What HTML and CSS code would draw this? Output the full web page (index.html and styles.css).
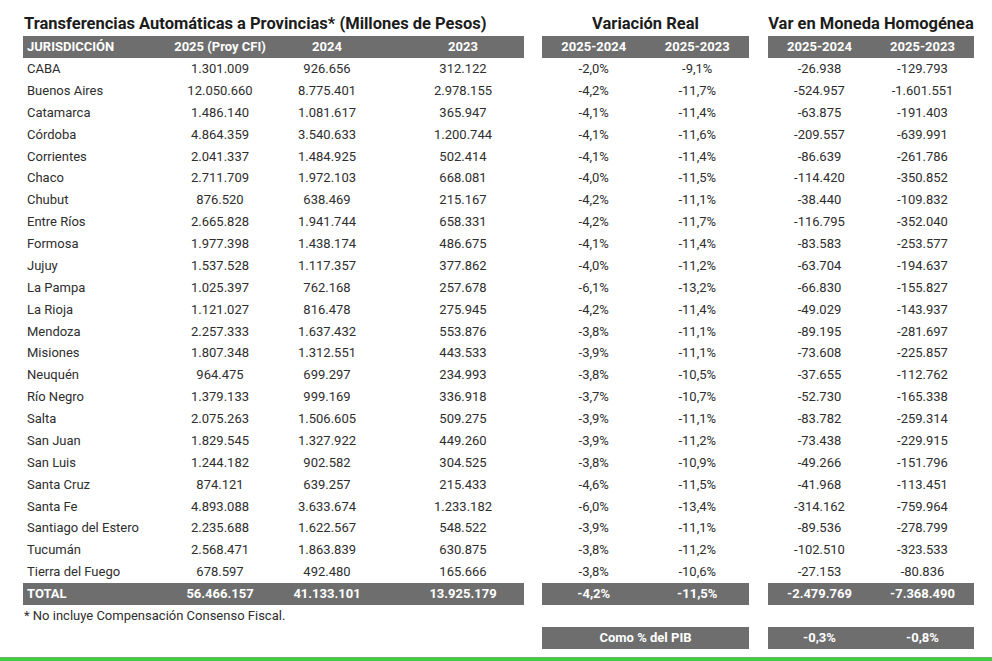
FILE: index.html
```html
<!DOCTYPE html>
<html lang="es">
<head>
<meta charset="utf-8">
<title>Transferencias Automáticas a Provincias</title>
<link rel="stylesheet" href="styles.css">
</head>
<body>
<div class="page">
  <div class="tables">
    <section class="block block-main">
      <h1 class="title title-left">Transferencias Automáticas a Provincias* (Millones de Pesos)</h1>
      <div class="row head cols-main"><div class="c l">JURISDICCIÓN</div><div class="c">2025 (Proy CFI)</div><div class="c">2024</div><div class="c">2023</div></div>
      <div class="row cols-main"><div class="c l">CABA</div><div class="c">1.301.009</div><div class="c">926.656</div><div class="c">312.122</div></div>
      <div class="row cols-main"><div class="c l">Buenos Aires</div><div class="c">12.050.660</div><div class="c">8.775.401</div><div class="c">2.978.155</div></div>
      <div class="row cols-main"><div class="c l">Catamarca</div><div class="c">1.486.140</div><div class="c">1.081.617</div><div class="c">365.947</div></div>
      <div class="row cols-main"><div class="c l">Córdoba</div><div class="c">4.864.359</div><div class="c">3.540.633</div><div class="c">1.200.744</div></div>
      <div class="row cols-main"><div class="c l">Corrientes</div><div class="c">2.041.337</div><div class="c">1.484.925</div><div class="c">502.414</div></div>
      <div class="row cols-main"><div class="c l">Chaco</div><div class="c">2.711.709</div><div class="c">1.972.103</div><div class="c">668.081</div></div>
      <div class="row cols-main"><div class="c l">Chubut</div><div class="c">876.520</div><div class="c">638.469</div><div class="c">215.167</div></div>
      <div class="row cols-main"><div class="c l">Entre Ríos</div><div class="c">2.665.828</div><div class="c">1.941.744</div><div class="c">658.331</div></div>
      <div class="row cols-main"><div class="c l">Formosa</div><div class="c">1.977.398</div><div class="c">1.438.174</div><div class="c">486.675</div></div>
      <div class="row cols-main"><div class="c l">Jujuy</div><div class="c">1.537.528</div><div class="c">1.117.357</div><div class="c">377.862</div></div>
      <div class="row cols-main"><div class="c l">La Pampa</div><div class="c">1.025.397</div><div class="c">762.168</div><div class="c">257.678</div></div>
      <div class="row cols-main"><div class="c l">La Rioja</div><div class="c">1.121.027</div><div class="c">816.478</div><div class="c">275.945</div></div>
      <div class="row cols-main"><div class="c l">Mendoza</div><div class="c">2.257.333</div><div class="c">1.637.432</div><div class="c">553.876</div></div>
      <div class="row cols-main"><div class="c l">Misiones</div><div class="c">1.807.348</div><div class="c">1.312.551</div><div class="c">443.533</div></div>
      <div class="row cols-main"><div class="c l">Neuquén</div><div class="c">964.475</div><div class="c">699.297</div><div class="c">234.993</div></div>
      <div class="row cols-main"><div class="c l">Río Negro</div><div class="c">1.379.133</div><div class="c">999.169</div><div class="c">336.918</div></div>
      <div class="row cols-main"><div class="c l">Salta</div><div class="c">2.075.263</div><div class="c">1.506.605</div><div class="c">509.275</div></div>
      <div class="row cols-main"><div class="c l">San Juan</div><div class="c">1.829.545</div><div class="c">1.327.922</div><div class="c">449.260</div></div>
      <div class="row cols-main"><div class="c l">San Luis</div><div class="c">1.244.182</div><div class="c">902.582</div><div class="c">304.525</div></div>
      <div class="row cols-main"><div class="c l">Santa Cruz</div><div class="c">874.121</div><div class="c">639.257</div><div class="c">215.433</div></div>
      <div class="row cols-main"><div class="c l">Santa Fe</div><div class="c">4.893.088</div><div class="c">3.633.674</div><div class="c">1.233.182</div></div>
      <div class="row cols-main"><div class="c l">Santiago del Estero</div><div class="c">2.235.688</div><div class="c">1.622.567</div><div class="c">548.522</div></div>
      <div class="row cols-main"><div class="c l">Tucumán</div><div class="c">2.568.471</div><div class="c">1.863.839</div><div class="c">630.875</div></div>
      <div class="row cols-main"><div class="c l">Tierra del Fuego</div><div class="c">678.597</div><div class="c">492.480</div><div class="c">165.666</div></div>
      <div class="row total cols-main"><div class="c l">TOTAL</div><div class="c">56.466.157</div><div class="c">41.133.101</div><div class="c">13.925.179</div></div>
      <p class="note">* No incluye Compensación Consenso Fiscal.</p>
    </section>

    <section class="block block-var">
      <h2 class="title">Variación Real</h2>
      <div class="row head cols-two"><div class="c">2025-2024</div><div class="c">2025-2023</div></div>
      <div class="row cols-two"><div class="c">-2,0%</div><div class="c">-9,1%</div></div>
      <div class="row cols-two"><div class="c">-4,2%</div><div class="c">-11,7%</div></div>
      <div class="row cols-two"><div class="c">-4,1%</div><div class="c">-11,4%</div></div>
      <div class="row cols-two"><div class="c">-4,1%</div><div class="c">-11,6%</div></div>
      <div class="row cols-two"><div class="c">-4,1%</div><div class="c">-11,4%</div></div>
      <div class="row cols-two"><div class="c">-4,0%</div><div class="c">-11,5%</div></div>
      <div class="row cols-two"><div class="c">-4,2%</div><div class="c">-11,1%</div></div>
      <div class="row cols-two"><div class="c">-4,2%</div><div class="c">-11,7%</div></div>
      <div class="row cols-two"><div class="c">-4,1%</div><div class="c">-11,4%</div></div>
      <div class="row cols-two"><div class="c">-4,0%</div><div class="c">-11,2%</div></div>
      <div class="row cols-two"><div class="c">-6,1%</div><div class="c">-13,2%</div></div>
      <div class="row cols-two"><div class="c">-4,2%</div><div class="c">-11,4%</div></div>
      <div class="row cols-two"><div class="c">-3,8%</div><div class="c">-11,1%</div></div>
      <div class="row cols-two"><div class="c">-3,9%</div><div class="c">-11,1%</div></div>
      <div class="row cols-two"><div class="c">-3,8%</div><div class="c">-10,5%</div></div>
      <div class="row cols-two"><div class="c">-3,7%</div><div class="c">-10,7%</div></div>
      <div class="row cols-two"><div class="c">-3,9%</div><div class="c">-11,1%</div></div>
      <div class="row cols-two"><div class="c">-3,9%</div><div class="c">-11,2%</div></div>
      <div class="row cols-two"><div class="c">-3,8%</div><div class="c">-10,9%</div></div>
      <div class="row cols-two"><div class="c">-4,6%</div><div class="c">-11,5%</div></div>
      <div class="row cols-two"><div class="c">-6,0%</div><div class="c">-13,4%</div></div>
      <div class="row cols-two"><div class="c">-3,9%</div><div class="c">-11,1%</div></div>
      <div class="row cols-two"><div class="c">-3,8%</div><div class="c">-11,2%</div></div>
      <div class="row cols-two"><div class="c">-3,8%</div><div class="c">-10,6%</div></div>
      <div class="row total cols-two"><div class="c">-4,2%</div><div class="c">-11,5%</div></div>
      <div class="row total pib"><div class="c">Como % del PIB</div></div>
    </section>

    <section class="block block-hom">
      <h2 class="title">Var en Moneda Homogénea</h2>
      <div class="row head cols-two"><div class="c">2025-2024</div><div class="c">2025-2023</div></div>
      <div class="row cols-two"><div class="c">-26.938</div><div class="c">-129.793</div></div>
      <div class="row cols-two"><div class="c">-524.957</div><div class="c">-1.601.551</div></div>
      <div class="row cols-two"><div class="c">-63.875</div><div class="c">-191.403</div></div>
      <div class="row cols-two"><div class="c">-209.557</div><div class="c">-639.991</div></div>
      <div class="row cols-two"><div class="c">-86.639</div><div class="c">-261.786</div></div>
      <div class="row cols-two"><div class="c">-114.420</div><div class="c">-350.852</div></div>
      <div class="row cols-two"><div class="c">-38.440</div><div class="c">-109.832</div></div>
      <div class="row cols-two"><div class="c">-116.795</div><div class="c">-352.040</div></div>
      <div class="row cols-two"><div class="c">-83.583</div><div class="c">-253.577</div></div>
      <div class="row cols-two"><div class="c">-63.704</div><div class="c">-194.637</div></div>
      <div class="row cols-two"><div class="c">-66.830</div><div class="c">-155.827</div></div>
      <div class="row cols-two"><div class="c">-49.029</div><div class="c">-143.937</div></div>
      <div class="row cols-two"><div class="c">-89.195</div><div class="c">-281.697</div></div>
      <div class="row cols-two"><div class="c">-73.608</div><div class="c">-225.857</div></div>
      <div class="row cols-two"><div class="c">-37.655</div><div class="c">-112.762</div></div>
      <div class="row cols-two"><div class="c">-52.730</div><div class="c">-165.338</div></div>
      <div class="row cols-two"><div class="c">-83.782</div><div class="c">-259.314</div></div>
      <div class="row cols-two"><div class="c">-73.438</div><div class="c">-229.915</div></div>
      <div class="row cols-two"><div class="c">-49.266</div><div class="c">-151.796</div></div>
      <div class="row cols-two"><div class="c">-41.968</div><div class="c">-113.451</div></div>
      <div class="row cols-two"><div class="c">-314.162</div><div class="c">-759.964</div></div>
      <div class="row cols-two"><div class="c">-89.536</div><div class="c">-278.799</div></div>
      <div class="row cols-two"><div class="c">-102.510</div><div class="c">-323.533</div></div>
      <div class="row cols-two"><div class="c">-27.153</div><div class="c">-80.836</div></div>
      <div class="row total cols-two"><div class="c">-2.479.769</div><div class="c">-7.368.490</div></div>
      <div class="row total pib cols-two"><div class="c">-0,3%</div><div class="c">-0,8%</div></div>
    </section>
  </div>
  <div class="green-line"></div>
</div>
</body>
</html>
```

FILE: styles.css
```css
* { box-sizing: border-box; }

html, body {
  margin: 0;
  padding: 0;
  background: #ffffff;
}

body {
  font-family: Roboto, "Liberation Sans", Arial, sans-serif;
  font-size: 13px;
  color: #2e2e2e;
}

.page {
  width: 992px;
  height: 661px;
  display: flex;
  flex-direction: column;
  overflow: hidden;
}

.tables {
  display: flex;
  align-items: flex-start;
  gap: 18px;
  padding: 12px 0 0 23px;
  flex: 1;
}

.block { display: flex; flex-direction: column; }
.block-main { width: 501px; }
.block-var { width: 207px; }
.block-hom { width: 206px; margin-left: 1px; }

.title {
  margin: 0;
  height: 24px;
  line-height: 24px;
  font-size: 16.5px;
  font-weight: 700;
  color: #1c1c1c;
  text-align: center;
  white-space: nowrap;
}

.title-left {
  text-align: left;
  padding-left: 1px;
}

.row {
  display: grid;
  height: 21.875px;
  line-height: 21.875px;
  white-space: nowrap;
}

.cols-main { grid-template-columns: 165px 64px 150px 122px; }
.cols-two { grid-template-columns: 1fr 1fr; }

.c {
  display: flex;
  justify-content: center;
  min-width: 0;
}

.c.l {
  justify-content: flex-start;
  padding-left: 4px;
}

.head, .total {
  background: #6e6e6e;
  color: #ffffff;
  font-weight: 700;
  height: 22px;
  line-height: 22px;
}

.pib {
  margin-top: 22px;
}

.note {
  margin: 0;
  height: 22px;
  line-height: 22px;
  padding-left: 1px;
  color: #2e2e2e;
}

.green-line {
  height: 4px;
  background: #3fce3f;
  border-top: 1px solid #6fae6f;
  flex: none;
}
```
